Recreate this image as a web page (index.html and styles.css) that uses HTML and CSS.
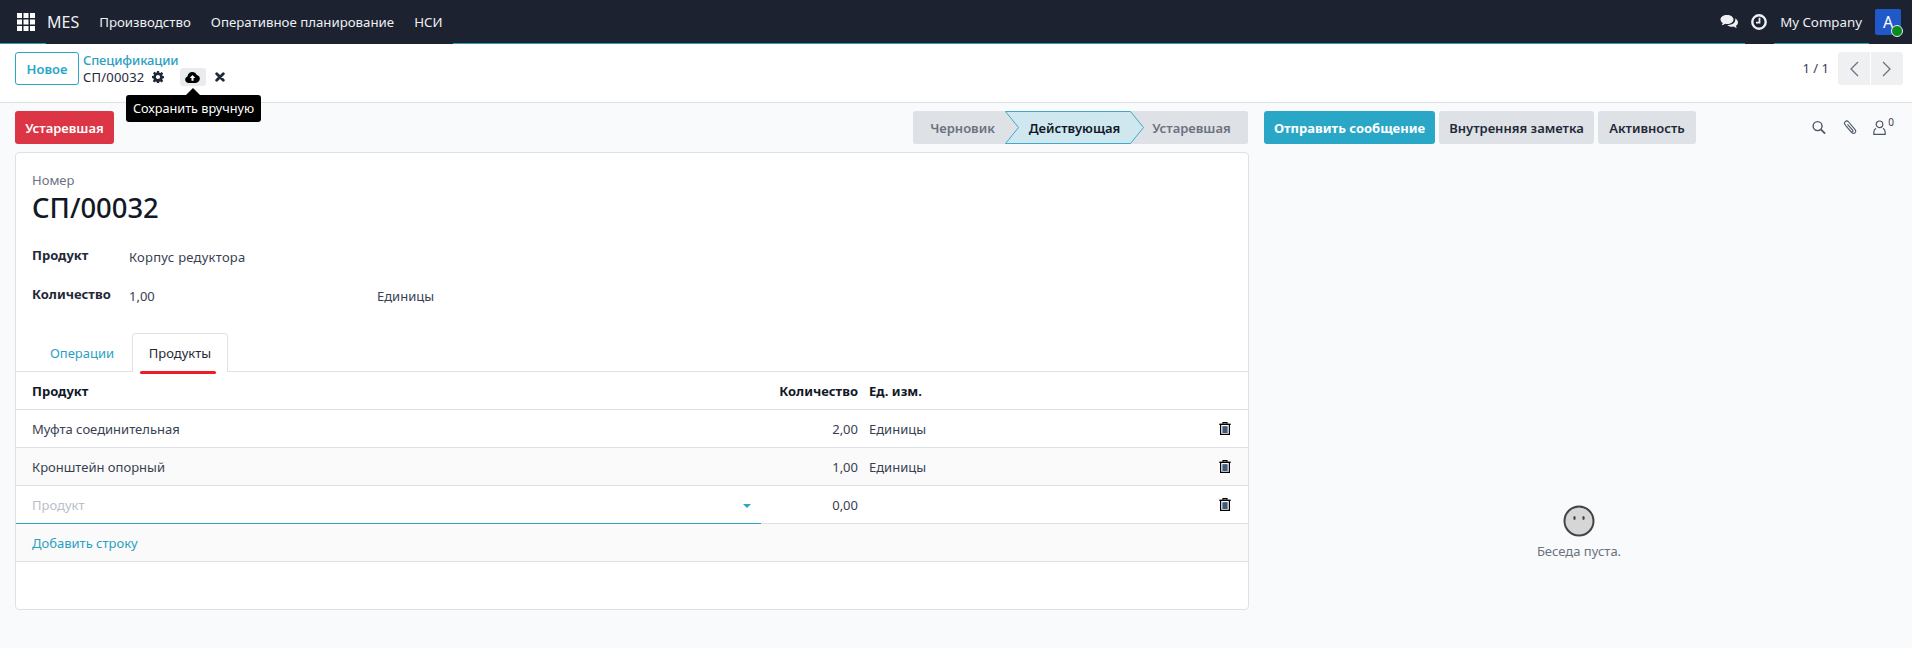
FILE: index.html
```html
<!DOCTYPE html>
<html lang="ru">
<head>
<meta charset="utf-8">
<title>MES</title>
<link rel="stylesheet" href="styles.css">
</head>
<body>
<header class="nav">
  <svg class="apps" width="18" height="18" viewBox="0 0 18 18" fill="#fff"><path d="M0 0h5v5H0zM6.500 0h5v5h-5zM13 0h5v5h-5zM0 6.500h5v5H0zM6.500 6.500h5v5h-5zM13 6.500h5v5h-5zM0 13h5v5H0zM6.500 13h5v5h-5zM13 13h5v5h-5z"/></svg>
  <span class="brand">MES</span>
  <a class="menu">Производство</a>
  <a class="menu">Оперативное планирование</a>
  <a class="menu">НСИ</a>
  <span class="spacer"></span>
  <svg class="sys" width="19" height="16" viewBox="0 0 19 16" fill="#eef0f3"><path d="M7 1C3.200 1 .5 3 .5 5.500c0 1.500 1 2.800 2.300 3.600-.2.900-.8 1.700-1.300 2.200 1.500-.1 2.800-.7 3.700-1.500.6.100 1.200.2 1.800.2 3.800 0 6.500-2 6.500-4.500S10.800 1 7 1z"/><path d="M15 4.600c.2.400.3.800.3 1.200 0 3-3 5.200-7 5.200-.4 0-.8 0-1.100-.1 1 1.100 2.800 1.800 4.800 1.800.6 0 1.100-.1 1.600-.2.900.8 2.100 1.400 3.400 1.500-.5-.5-1-1.200-1.200-2 1.300-.8 2.200-2 2.200-3.400 0-1.700-1.100-3.100-2.700-4z"/></svg>
  <svg class="sys clock" width="16" height="16" viewBox="0 0 16 16"><circle cx="8" cy="8" r="6.700" fill="none" stroke="#eef0f3" stroke-width="2.400"/><path d="M8.500 3.800v4.900H5" fill="none" stroke="#eef0f3" stroke-width="1.800"/></svg>
  <span class="company">My Company</span>
  <span class="avatar">A<i class="online"></i></span>
</header>

<section class="panel">
  <button class="btn-new">Новое</button>
  <div class="crumbs">
    <a class="crumb-link">Спецификации</a>
    <div class="crumb-row">
      <span class="crumb-current">СП/00032</span>
      <svg class="gear" width="12" height="12" viewBox="0 0 16 16" fill="#1f2937"><path fill-rule="evenodd" d="M6.600 0h2.800l.4 2.200 1.300.5 1.800-1.300 2 2-1.300 1.800.5 1.300 2.200.4v2.800l-2.200.4-.5 1.300 1.300 1.800-2 2-1.800-1.300-1.300.5-.4 2.200H6.600l-.4-2.200-1.300-.5-1.800 1.300-2-2 1.300-1.800-.5-1.300L0 9.400V6.600l2.200-.4.500-1.300L1.400 3.100l2-2 1.800 1.300 1.300-.5zM8 5.200a2.800 2.800 0 1 0 0 5.600 2.800 2.800 0 0 0 0-5.600z"/></svg>
      <span class="save"><svg width="15" height="11" viewBox="0 0 16 12"><path d="M3.800 12C1.700 12 0 10.400 0 8.400 0 6.800 1 5.500 2.500 5 2.700 2.200 5 0 7.800 0c2.200 0 4.100 1.300 4.900 3.300C14.600 3.600 16 5.200 16 7.200 16 9.800 13.900 12 11.500 12z" fill="#000"/><path d="M8 3.200 4.900 6.600h2v3h2.200v-3h2z" fill="#fff"/></svg></span>
      <svg class="discard" width="10" height="10" viewBox="0 0 10 10"><path d="M1.700 1.700l6.600 6.600M8.300 1.700 1.700 8.300" stroke="#1f2937" stroke-width="2.800" stroke-linecap="round"/></svg>
    </div>
  </div>
  <span class="spacer"></span>
  <span class="pager">1 / 1</span>
  <div class="pager-btns">
    <button class="pager-btn"><svg width="12" height="16" viewBox="0 0 12 16"><path d="M10 1 3 8l7 7" fill="none" stroke="#6b7280" stroke-width="1.300"/></svg></button>
    <button class="pager-btn"><svg width="12" height="16" viewBox="0 0 12 16"><path d="M2 1l7 7-7 7" fill="none" stroke="#6b7280" stroke-width="1.300"/></svg></button>
  </div>
  <div class="tooltip">Сохранить вручную</div>
</section>

<main class="content">
  <div class="form-side">
    <div class="statusbar">
      <button class="btn-obsolete">Устаревшая</button>
      <div class="stages">
        <span class="stage first">Черновик</span>
        <span class="stage current"><svg class="chevron" width="139" height="33" viewBox="0 0 139 33"><polygon points="0.500,0.500 125.500,0.500 138.500,16.500 125.500,32.500 0.500,32.500 13.500,16.500" fill="#cfe8f0" stroke="#3fa9c9"/></svg><b class="stage-text">Действующая</b></span>
        <span class="stage last">Устаревшая</span>
      </div>
    </div>
    <div class="sheet">
      <div class="sheet-head">
        <div class="name-label">Номер</div>
        <h1 class="name">СП/00032</h1>
        <div class="field first-field"><label>Продукт</label><span class="wide">Корпус редуктора</span></div>
        <div class="field"><label>Количество</label><span class="qty">1,00</span><span>Единицы</span></div>
      </div>
      <div class="tabs">
        <a class="tab">Операции</a>
        <a class="tab active">Продукты</a>
      </div>
      <div class="row head"><span class="c-prod">Продукт</span><span class="c-qty">Количество</span><span class="c-uom">Ед. изм.</span></div>
      <div class="row"><span class="c-prod">Муфта соединительная</span><span class="c-qty">2,00</span><span class="c-uom">Единицы</span><svg class="trash" viewBox="0 0 12 13" width="12" height="13"><use href="#trash"/></svg></div>
      <div class="row alt"><span class="c-prod">Кронштейн опорный</span><span class="c-qty">1,00</span><span class="c-uom">Единицы</span><svg class="trash" viewBox="0 0 12 13" width="12" height="13"><use href="#trash"/></svg></div>
      <div class="row"><span class="c-prod edit"><span class="ph">Продукт</span><i class="caret"></i></span><span class="c-qty">0,00</span><span class="c-uom"></span><svg class="trash" viewBox="0 0 12 13" width="12" height="13"><use href="#trash"/></svg></div>
      <div class="row alt"><a class="add">Добавить строку</a></div>
    </div>
  </div>
  <aside class="chatter">
    <div class="chatter-bar">
      <button class="btn-send">Отправить сообщение</button>
      <button class="btn-grey note">Внутренняя заметка</button>
      <button class="btn-grey activity">Активность</button>
      <span class="spacer"></span>
      <svg width="14" height="15" viewBox="0 0 15 15"><circle cx="6" cy="6" r="4.800" fill="none" stroke="#4b5563" stroke-width="1.500"/><path d="M9.500 9.500 14 14" stroke="#4b5563" stroke-width="1.800"/></svg>
      <svg width="15" height="16" viewBox="0 0 15 16"><path d="M3.500 5.500l6 7c1 1.200 2.600 1.300 3.500.4s.9-2.300-.1-3.500L6.700 2C5.700.9 4.200.8 3.300 1.600S2.300 3.800 3.300 5l5.700 6.600c.5.600 1.200.7 1.700.3s.4-1.100-.1-1.700L5.500 4.300" fill="none" stroke="#4b5563" stroke-width="1.100"/></svg>
      <span class="followers"><svg width="13" height="15" viewBox="0 0 13 15"><circle cx="6.500" cy="4.300" r="3.300" fill="none" stroke="#4b5563" stroke-width="1.200"/><path d="M3 8.200C1.600 9 .8 10.500.8 12.500v1.800h11.400v-1.800c0-2-.8-3.500-2.200-4.300" fill="none" stroke="#4b5563" stroke-width="1.200"/></svg><sup>0</sup></span>
    </div>
    <div class="empty">
      <svg width="32" height="32" viewBox="0 0 32 32"><circle cx="16" cy="16" r="14.500" fill="#d6d6d6" stroke="#444" stroke-width="2"/><ellipse cx="11.500" cy="13" rx="1.200" ry="2" fill="#444"/><ellipse cx="20.500" cy="13" rx="1.200" ry="2" fill="#444"/></svg>
      <p>Беседа пуста.</p>
    </div>
  </aside>
</main>
<svg class="defs" width="0" height="0"><defs><g id="trash"><path d="M4 1.800V.7h4v1.100" fill="none" stroke="#000" stroke-width="1.200"/><path d="M.3 2.300h11.400" stroke="#000" stroke-width="1.400"/><path d="M1.600 3v9.400h8.800V3" fill="none" stroke="#000" stroke-width="1.200"/><path d="M3.200 4.200h5.600v6.800H3.200z" fill="#5f7f9f"/><path d="M4.800 4.200v6.800M6 4.200v6.800M7.200 4.200v6.800" stroke="#1f2937" stroke-width=".6"/></g></defs></svg>
</body>
</html>
```
FILE: styles.css
```css
* { box-sizing: border-box; }
html, body { margin: 0; height: 648px; overflow: hidden; }
body { font-family: "Noto Sans", sans-serif; font-size: 13px; color: #374151; background: #f9fafc; }
button { font: inherit; border: 0; cursor: pointer; }
.spacer { flex: 1; }
.defs { position: absolute; }

.nav { height: 44px; background: #1c2230; color: #eef0f3; display: flex; align-items: center; padding-left: 17px; position: relative; }
.nav::after { content: ""; position: absolute; left: 0; right: 0; bottom: 0; height: 1px;
  background: linear-gradient(to right, #2a9db8 46px, transparent 46px, transparent 453px, #2a9db8 453px, #2a9db8 1745px, transparent 1745px, transparent 1774px, #2a9db8 1774px, #2a9db8 1869px, transparent 1869px); }
.brand { font-size: 16px; margin-left: 12px; margin-right: 20px; }
.menu { margin-right: 20px; font-size: 13.250px; }
.sys { margin-right: 12px; }
.clock { margin-right: 13px; }
.company { font-size: 13.300px; margin-right: 13px; }
.avatar { width: 26px; height: 26px; margin-right: 11px; border-radius: 2px; background: #2158c9; color: #fff; font-size: 16px; display: flex; align-items: center; justify-content: center; position: relative; }
.online { position: absolute; right: -2px; bottom: -2px; width: 12px; height: 12px; border-radius: 50%; background: #0a8a1f; border: 1px solid #e6e8ec; }

.panel { height: 59px; background: #fff; border-bottom: 1px solid #dee2e6; display: flex; align-items: flex-start; padding: 8px 9px 0 15px; position: relative; }
.btn-new { width: 64px; height: 33px; padding: 0; background: #fff; color: #2ba6c7; border: 1px solid #2ba6c7; border-radius: 3px; font-weight: 600; }
.crumbs { margin-left: 4px; }
.crumb-link { display: block; color: #2b9fc2; font-weight: 500; letter-spacing: -.15px; line-height: 16px; }
.crumb-row { display: flex; align-items: center; line-height: 18px; color: #1f2937; }
.crumb-current { letter-spacing: .2px; }
.gear { margin-left: 7.500px; }
.save { width: 26px; height: 18px; background: #e9ebee; border-radius: 3px; margin-left: 16px; display: flex; align-items: center; justify-content: center; }
.discard { margin-left: 9px; }
.pager { color: #374151; margin-right: 9px; line-height: 33px; }
.pager-btns { display: flex; gap: 1px; }
.pager-btn { width: 32px; height: 33px; background: #eff0f2; padding: 0; display: flex; align-items: center; justify-content: center; }
.pager-btn:first-child { border-radius: 3px 0 0 3px; }
.pager-btn:last-child { border-radius: 0 3px 3px 0; }
.tooltip { position: absolute; left: 126px; top: 51px; width: 135px; height: 27px; background: #000; color: #fff; border-radius: 3px; font-size: 12.700px; line-height: 27px; text-align: center; z-index: 5; }
.tooltip::before { content: ""; position: absolute; left: 60px; top: -7px; border: 7px solid transparent; border-top: 0; border-bottom-color: #000; }

.content { display: flex; padding: 8px 0 0 15px; }
.form-side { width: 1234px; }
.statusbar { display: flex; justify-content: space-between; height: 33px; width: 1233px; }
.btn-obsolete { width: 99px; height: 33px; background: #dc3545; color: #fff; font-weight: 600; border-radius: 3px; padding: 0; }
.stages { display: flex; height: 33px; background: #dee1e6; width: 335px; font-weight: 600; color: #6b7280; border-radius: 2px; }
.stage { display: flex; align-items: center; justify-content: center; }
.first { width: 92px; padding-left: 7px; }
.current { width: 139px; color: #111827; position: relative; }
.chevron { position: absolute; left: 0; top: 0; }
.stage-text { position: relative; font-weight: 600; }
.last { width: 104px; padding-right: 9px; }
.sheet { margin-top: 8px; height: 458px; background: #fff; border: 1px solid #dee2e6; border-radius: 4px; }
.sheet-head { padding: 18px 16px 0 16px; height: 177px; }
.name-label { color: #6b7280; line-height: 18px; }
.name { margin: 1px 0 0; color: #111827; font-size: 27.400px; font-weight: 500; line-height: 36px; }
.field { display: flex; height: 39px; }
.first-field { margin-top: 20px; }
.field label { width: 97px; font-weight: 700; color: #1f2937; }
.field span { margin-top: 2px; }
.wide { letter-spacing: .25px; }
.qty { width: 248px; }

.tabs { height: 42px; padding: 3px 0 0 16px; display: flex; border-bottom: 1px solid #dee2e6; }
.tab { width: 100px; height: 39px; display: flex; align-items: center; justify-content: center; color: #2b9fc2; border: 1px solid transparent; border-bottom: 0; }
.tab.active { color: #1f2937; background: #fff; border-color: #dee2e6; border-radius: 4px 4px 0 0; position: relative; width: 96px; }
.tab.active::after { content: ""; position: absolute; left: 7px; right: 11px; bottom: -2px; height: 3px; border-radius: 2px; background: #ee1c25; }

.row { height: 38px; display: flex; align-items: center; border-bottom: 1px solid #dee2e6; padding-left: 16px; position: relative; }
.row.alt { background: #fafafa; }
.row.head { font-weight: 700; color: #111827; }
.c-prod { width: 719px; }
.c-qty { width: 107px; text-align: right; }
.c-uom { margin-left: 11px; }
.trash { position: absolute; right: 17px; top: 12px; }
.edit { display: flex; align-items: center; height: 38px; margin: 0 -10px 0 -16px; padding: 1px 0 0 16px; width: 745px; border-bottom: 1px solid #2ba6c7; position: relative; }
.ph { color: #b9bec8; }
.caret { position: absolute; right: 10px; top: 18px; border: 4px solid transparent; border-bottom: 0; border-top-color: #2ba6c7; }
.add { color: #2b9fc2; }

.chatter { width: 663px; padding: 0 18px 0 15px; }
.chatter-bar { display: flex; align-items: center; height: 33px; gap: 4px; }
.chatter-bar > svg { margin-right: 12px; }
.btn-send, .btn-grey { height: 33px; padding: 0; border-radius: 3px; }
.btn-send { width: 171px; background: #2aa7c7; color: #fff; font-weight: 700; }
.btn-grey { background: #dee1e6; color: #1f2937; font-weight: 600; }
.note { width: 155px; }
.activity { width: 98px; }
.followers { display: flex; align-items: flex-start; }
.followers sup { font-size: 10px; line-height: 10px; margin-left: 2px; margin-top: -3px; }
.empty { margin-top: 361px; text-align: center; color: #6b7280; }
.empty svg { display: block; margin: 0 auto; }
.empty p { margin: 5px 0 0; }
```
